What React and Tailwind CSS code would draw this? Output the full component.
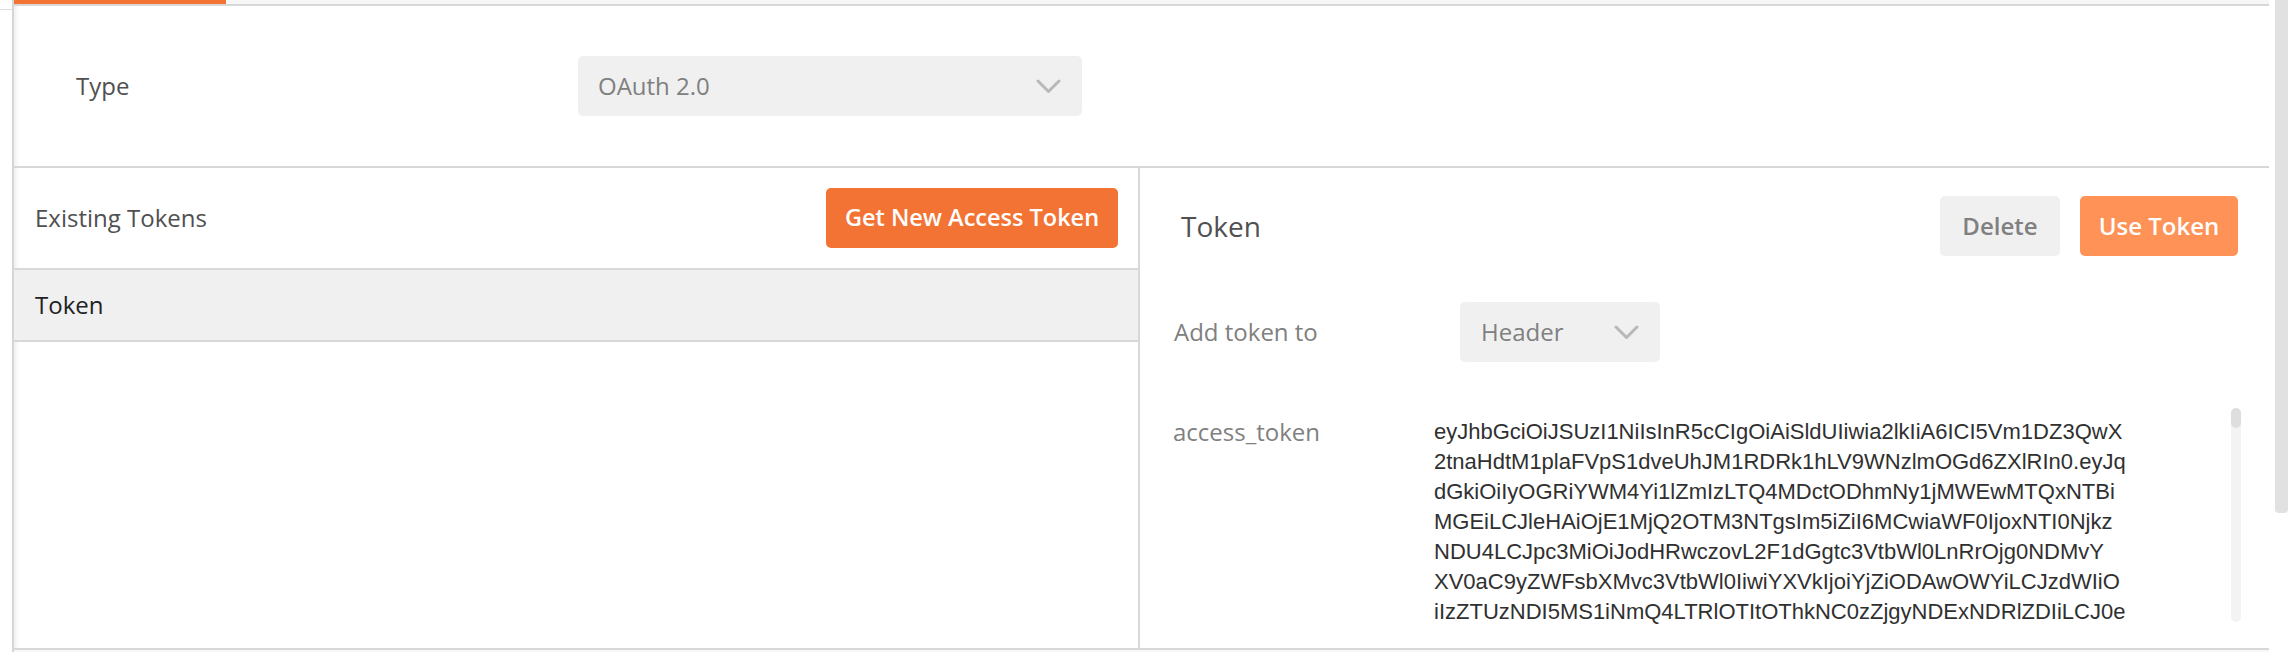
import React from "react";

function Chevron() {
  return (
    <svg width="25" height="15" viewBox="0 0 25 15" className="shrink-0">
      <polyline points="2,2 12.5,12.5 23,2" fill="none" stroke="#b8b8b8" strokeWidth="3" strokeLinecap="round" strokeLinejoin="round" />
    </svg>
  );
}

const tokenLines = [
  "eyJhbGciOiJSUzI1NiIsInR5cCIgOiAiSldUIiwia2lkIiA6ICI5Vm1DZ3QwX",
  "2tnaHdtM1plaFVpS1dveUhJM1RDRk1hLV9WNzlmOGd6ZXlRIn0.eyJq",
  "dGkiOiIyOGRiYWM4Yi1lZmIzLTQ4MDctODhmNy1jMWEwMTQxNTBi",
  "MGEiLCJleHAiOjE1MjQ2OTM3NTgsIm5iZiI6MCwiaWF0IjoxNTI0Njkz",
  "NDU4LCJpc3MiOiJodHRwczovL2F1dGgtc3VtbWl0LnRrOjg0NDMvY",
  "XV0aC9yZWFsbXMvc3VtbWl0IiwiYXVkIjoiYjZiODAwOWYiLCJzdWIiO",
  "iIzZTUzNDI5MS1iNmQ4LTRlOTItOThkNC0zZjgyNDExNDRlZDIiLCJ0e",
];

export default function App() {
  return (
    <div className="w-[2292px] h-[652px] bg-white flex overflow-hidden font-['Open_Sans',sans-serif] text-[24px]">
      {/* left gutter */}
      <div className="w-[12px] shrink-0">
        <div className="h-[10px] border-b border-[#dcdcdc]" />
      </div>

      {/* main frame */}
      <div className="w-[2257px] shrink-0 h-[652px] flex flex-col border-l-2 border-[#d6d6d6] shadow-[inset_6px_0_5px_-4px_rgba(0,0,0,0.08)]">
        {/* tab strip */}
        <div className="h-[4px] bg-[#f7f7f7] flex">
          <div className="w-[212px] h-[4px] bg-[#f37335]" />
        </div>
        <div className="h-[2px] bg-[#d8d8d8]" />

        {/* type section */}
        <div className="h-[160px] flex items-center">
          <div className="w-[564px] pl-[62px] text-[#505050]">Type</div>
          <div className="w-[504px] h-[60px] bg-[#f0f0f0] rounded-[5px] flex items-center justify-between pl-[20px] pr-[21px]">
            <span className="text-[#808080]">OAuth 2.0</span>
            <Chevron />
          </div>
        </div>
        <div className="h-[2px] bg-[#d8d8d8]" />

        {/* panels */}
        <div className="h-[480px] flex">
          {/* left panel */}
          <div className="w-[1126px] flex flex-col border-r-2 border-[#d8d8d8]">
            <div className="h-[100px] flex items-center justify-between pl-[21px] pr-[20px]">
              <span className="text-[#505050]">Existing Tokens</span>
              <button className="w-[292px] h-[60px] rounded-[5px] bg-[#f37335] text-white font-semibold text-[23.5px] flex items-center justify-center">
                Get New Access Token
              </button>
            </div>
            <div className="h-[2px] bg-[#d8d8d8]" />
            <div className="h-[70px] bg-[#f0f0f0] flex items-center pl-[21px] text-[#222222]">Token</div>
            <div className="h-[2px] bg-[#d8d8d8]" />
          </div>

          {/* right panel */}
          <div className="w-[1127px] flex flex-col">
            <div className="pt-[28px] flex items-center justify-between pl-[41px] pr-[29px]">
              <span className="text-[28px] text-[#505050]">Token</span>
              <div className="flex gap-[20px]">
                <button className="w-[120px] h-[60px] rounded-[5px] bg-[#f0f0f0] text-[#808080] font-semibold flex items-center justify-center">
                  Delete
                </button>
                <button className="w-[158px] h-[60px] rounded-[5px] bg-[#fe9257] text-white font-semibold flex items-center justify-center">
                  Use Token
                </button>
              </div>
            </div>

            <div className="mt-[46px] h-[60px] flex items-center">
              <div className="w-[320px] pl-[34px] text-[#808080]">Add token to</div>
              <div className="w-[200px] h-[60px] bg-[#f0f0f0] rounded-[5px] flex items-center justify-between pl-[21px] pr-[21px]">
                <span className="text-[#808080]">Header</span>
                <Chevron />
              </div>
            </div>

            <div className="mt-[46px] flex">
              <div className="w-[294px] pl-[33px] pt-[9px] leading-[30px] text-[#808080]">access_token</div>
              <div className="w-[797px] h-[222px] overflow-hidden pt-[9px] font-['Liberation_Sans',Arial,sans-serif] text-[22px] leading-[30px] text-[#303030] whitespace-nowrap">
                {tokenLines.map((l, i) => (
                  <div key={i}>{l}</div>
                ))}
              </div>
              <div className="w-[10px] h-[214px] rounded-full bg-[#f3f3f3] flex flex-col">
                <div className="h-[20px] rounded-full bg-[#dedede]" />
              </div>
            </div>
          </div>
        </div>
        <div className="h-[2px] bg-[#d8d8d8]" />
        <div className="h-[2px] bg-[#f7f7f7]" />
      </div>

      {/* outer scrollbar */}
      <div className="w-[23px] shrink-0 pl-[6px] pr-[4px]">
        <div className="w-[13px] h-[513px] bg-[#e1e1e1] rounded-b-[4px]" />
      </div>
    </div>
  );
}
